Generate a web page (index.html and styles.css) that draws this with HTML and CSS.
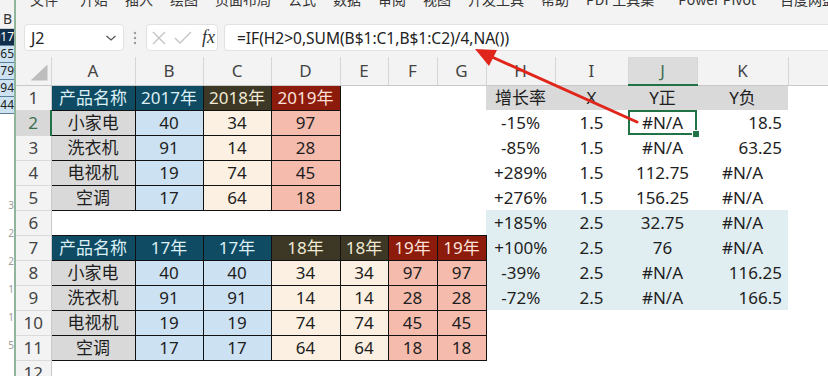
FILE: index.html
```html
<!DOCTYPE html>
<html lang="zh-CN">
<head>
    <meta charset="UTF-8">
    <title>工作簿 - Excel</title>
    <link rel="stylesheet" href="styles.css">
</head>
<body>
    <div class="screen">
        <!-- other workbook window peeking out on the left -->
        <aside class="behind">
            <div class="bh-top"></div>
            <div class="bh-col">B</div>
            <div class="bh-cell bh-head">017</div>
            <div class="bh-cell">65</div>
            <div class="bh-cell">79</div>
            <div class="bh-cell">94</div>
            <div class="bh-cell">44</div>
            <div class="bh-axis">
                <span>3</span><span>2</span><span>2</span><span>1</span><span>1</span><span>5</span>
            </div>
        </aside>

        <div class="excel">
            <nav class="tabs">
                <span class="first">文件</span><span>开始</span><span>插入</span><span>绘图</span><span>页面布局</span>
                <span>公式</span><span>数据</span><span>审阅</span><span>视图</span><span>开发工具</span>
                <span>帮助</span><span class="wide">PDF工具集</span><span class="wide">Power Pivot</span><span>百度网盘</span>
            </nav>

            <div class="formula-bar">
                <div class="name-box">
                    <span>J2</span>
                    <svg width="12" height="8" viewBox="0 0 12 8"><path d="M1.5 2 L6 6 L10.5 2" fill="none" stroke="#555" stroke-width="1.3"/></svg>
                </div>
                <div class="grip">
                    <svg width="4" height="14" viewBox="0 0 4 14"><circle cx="2" cy="2" r="1.2"/><circle cx="2" cy="7" r="1.2"/><circle cx="2" cy="12" r="1.2"/></svg>
                </div>
                <div class="fx-box">
                    <svg width="14" height="14" viewBox="0 0 14 14"><path d="M1 1 L13 13 M13 1 L1 13" stroke="#c4c4c4" stroke-width="1.4"/></svg>
                    <svg width="18" height="14" viewBox="0 0 18 14"><path d="M1 7 L6 12 L17 1" fill="none" stroke="#c4c4c4" stroke-width="1.4"/></svg>
                    <span class="fx">fx</span>
                </div>
                <div class="formula-input">=IF(H2&gt;0,SUM(B$1:C1,B$1:C2)/4,NA())</div>
            </div>

            <div class="sheet">
                <table class="grid">
                    <colgroup>
                        <col class="w-rh"><col class="w-a"><col class="w-b"><col class="w-c"><col class="w-d">
                        <col class="w-e"><col class="w-f"><col class="w-g"><col class="w-h"><col class="w-i">
                        <col class="w-j"><col class="w-k"><col class="w-l">
                    </colgroup>
                    <tr class="head">
                        <th class="corner"><span class="tri"></span></th>
                        <th>A</th><th>B</th><th>C</th><th>D</th><th>E</th><th>F</th><th>G</th>
                        <th>H</th><th>I</th><th class="on">J</th><th>K</th><th></th>
                    </tr>
                    <tr>
                        <th class="rh">1</th>
                        <td class="bd teal">产品名称</td><td class="bd teal">2017年</td><td class="bd olive">2018年</td><td class="bd red">2019年</td>
                        <td></td><td></td><td></td>
                        <td class="gr">增长率</td><td class="gr">X</td><td class="gr">Y正</td><td class="gr">Y负</td><td></td>
                    </tr>
                    <tr>
                        <th class="rh on">2</th>
                        <td class="bd grey">小家电</td><td class="bd blue">40</td><td class="bd cream">34</td><td class="bd pink">97</td>
                        <td></td><td></td><td></td>
                        <td>-15%</td><td>1.5</td><td class="sel">#N/A</td><td class="num">18.5</td><td></td>
                    </tr>
                    <tr>
                        <th class="rh">3</th>
                        <td class="bd grey">洗衣机</td><td class="bd blue">91</td><td class="bd cream">14</td><td class="bd pink">28</td>
                        <td></td><td></td><td></td>
                        <td>-85%</td><td>1.5</td><td>#N/A</td><td class="num">63.25</td><td></td>
                    </tr>
                    <tr>
                        <th class="rh">4</th>
                        <td class="bd grey">电视机</td><td class="bd blue">19</td><td class="bd cream">74</td><td class="bd pink">45</td>
                        <td></td><td></td><td></td>
                        <td>+289%</td><td>1.5</td><td>112.75</td><td>#N/A</td><td></td>
                    </tr>
                    <tr>
                        <th class="rh">5</th>
                        <td class="bd grey">空调</td><td class="bd blue">17</td><td class="bd cream">64</td><td class="bd pink">18</td>
                        <td></td><td></td><td></td>
                        <td>+276%</td><td>1.5</td><td>156.25</td><td>#N/A</td><td></td>
                    </tr>
                    <tr>
                        <th class="rh">6</th>
                        <td></td><td></td><td></td><td></td><td></td><td></td><td></td>
                        <td class="mist">+185%</td><td class="mist">2.5</td><td class="mist">32.75</td><td class="mist">#N/A</td><td></td>
                    </tr>
                    <tr>
                        <th class="rh">7</th>
                        <td class="bd teal">产品名称</td><td class="bd teal">17年</td><td class="bd teal">17年</td>
                        <td class="bd olive">18年</td><td class="bd olive">18年</td><td class="bd red">19年</td><td class="bd red">19年</td>
                        <td class="mist">+100%</td><td class="mist">2.5</td><td class="mist">76</td><td class="mist">#N/A</td><td></td>
                    </tr>
                    <tr>
                        <th class="rh">8</th>
                        <td class="bd grey">小家电</td><td class="bd blue">40</td><td class="bd blue">40</td>
                        <td class="bd cream">34</td><td class="bd cream">34</td><td class="bd pink">97</td><td class="bd pink">97</td>
                        <td class="mist">-39%</td><td class="mist">2.5</td><td class="mist">#N/A</td><td class="mist num">116.25</td><td></td>
                    </tr>
                    <tr>
                        <th class="rh">9</th>
                        <td class="bd grey">洗衣机</td><td class="bd blue">91</td><td class="bd blue">91</td>
                        <td class="bd cream">14</td><td class="bd cream">14</td><td class="bd pink">28</td><td class="bd pink">28</td>
                        <td class="mist">-72%</td><td class="mist">2.5</td><td class="mist">#N/A</td><td class="mist num">166.5</td><td></td>
                    </tr>
                    <tr>
                        <th class="rh">10</th>
                        <td class="bd grey">电视机</td><td class="bd blue">19</td><td class="bd blue">19</td>
                        <td class="bd cream">74</td><td class="bd cream">74</td><td class="bd pink">45</td><td class="bd pink">45</td>
                        <td></td><td></td><td></td><td></td><td></td>
                    </tr>
                    <tr>
                        <th class="rh">11</th>
                        <td class="bd grey">空调</td><td class="bd blue">17</td><td class="bd blue">17</td>
                        <td class="bd cream">64</td><td class="bd cream">64</td><td class="bd pink">18</td><td class="bd pink">18</td>
                        <td></td><td></td><td></td><td></td><td></td>
                    </tr>
                    <tr>
                        <th class="rh">12</th>
                        <td></td><td></td><td></td><td></td><td></td><td></td><td></td>
                        <td></td><td></td><td></td><td></td><td></td>
                    </tr>
                </table>
            </div>
        </div>

        <!-- red callout pointing at the formula -->
        <svg class="arrow" width="828" height="376" viewBox="0 0 828 376">
            <line x1="637" y1="122" x2="492" y2="57" stroke="#e0251b" stroke-width="3" stroke-linecap="round"/>
            <polygon points="475,49 497,50 489,66" fill="#e0251b"/>
        </svg>
    </div>
</body>
</html>
```

FILE: styles.css
```css
* {
    margin: 0;
    padding: 0;
    box-sizing: border-box;
}

body {
    width: 828px;
    height: 376px;
    overflow: hidden;
    background: #ffffff;
    font-family: 'Noto Sans', 'Noto Sans CJK SC', sans-serif;
    color: #222;
}

.screen {
    position: relative;
    display: flex;
    width: 828px;
    height: 376px;
    overflow: hidden;
}

/* ---- window behind ---- */
.behind {
    width: 16px;
    flex: none;
    display: flex;
    flex-direction: column;
    overflow: hidden;
    border-right: 2px solid #8fb59c;
    background: #fff;
    font-size: 12px;
    line-height: 14px;
}

.bh-top {
    height: 10px;
    background: #f3f3f3;
}

.bh-col {
    height: 19px;
    padding: 2px 0 0 3px;
    background: #f3f3f3;
    color: #333;
    font-size: 14px;
    border-bottom: 1px solid #cfcfcf;
}

.bh-cell {
    height: 17px;
    display: flex;
    justify-content: flex-end;
    align-items: center;
    background: #cde3f3;
    border-bottom: 1px solid #5c7f99;
    color: #222;
    white-space: nowrap;
}

.bh-head {
    background: #102f4c;
    color: #fff;
}

.bh-axis {
    display: flex;
    flex-direction: column;
    align-items: flex-end;
    gap: 14px;
    padding-top: 84px;
    font-size: 10px;
    line-height: 14px;
    color: #9a9a9a;
}

/* ---- excel window ---- */
.excel {
    flex: 1;
    display: flex;
    flex-direction: column;
    background: #f3f3f3;
    overflow: hidden;
}

.tabs {
    display: flex;
    gap: 17px;
    height: 20px;
    margin-top: -11px;
    padding-left: 14px;
    font-family: 'Noto Sans CJK SC', sans-serif;
    font-size: 14px;
    line-height: 20px;
    color: #333;
    white-space: nowrap;
}

.tabs .first {
    margin-right: 5px;
}

.tabs .wide {
    margin-right: 7px;
}

.formula-bar {
    display: flex;
    align-items: center;
    height: 27px;
    margin-top: 15px;
    padding-left: 8px;
}

.name-box,
.fx-box,
.formula-input {
    height: 27px;
    background: #fff;
    border: 1px solid #e2e2e2;
    border-radius: 4px;
    display: flex;
    align-items: center;
}

.name-box {
    width: 100px;
    justify-content: space-between;
    padding: 0 6px 0 6px;
    font-size: 16px;
    color: #222;
}

.grip {
    width: 22px;
    display: flex;
    justify-content: center;
    fill: #9a9a9a;
}

.fx-box {
    width: 72px;
    gap: 8px;
    padding-left: 5px;
}

.fx {
    font-family: 'Liberation Serif', serif;
    font-style: italic;
    font-size: 18px;
    color: #333;
    margin-left: 2px;
}

.formula-input {
    flex: 1;
    margin-left: 6px;
    padding-left: 12px;
    font-size: 15.5px;
    color: #222;
    border-right: none;
    border-radius: 4px 0 0 4px;
    white-space: nowrap;
}

/* ---- sheet grid ---- */
.sheet {
    flex: 1;
    margin-top: 6px;
    background: #fff;
    overflow: hidden;
}

.grid {
    border-collapse: collapse;
    table-layout: fixed;
    width: 832px;
    font-size: 17px;
}

.w-rh { width: 35px; }
.w-a { width: 84px; }
.w-b { width: 68px; }
.w-c { width: 68px; }
.w-d { width: 69px; }
.w-e { width: 48px; }
.w-f { width: 49px; }
.w-g { width: 49px; }
.w-h { width: 69px; }
.w-i { width: 73px; }
.w-j { width: 69px; }
.w-k { width: 91px; }
.w-l { width: 60px; }

.grid tr {
    height: 25px;
}

.grid tr.head {
    height: 28px;
}

.grid td {
    text-align: center;
    vertical-align: middle;
    white-space: nowrap;
    padding: 0;
    line-height: 22px;
    color: #1e1e1e;
}

.head th {
    background: #f3f3f3;
    color: #444;
    font-weight: normal;
    border-right: 1px solid #d6d6d6;
    border-bottom: 1px solid #c9c9c9;
}

.head th.on {
    background: #dcdcdc;
    color: #3d6e52;
    border-bottom: 2px solid #217346;
}

.head th.corner {
    text-align: right;
    vertical-align: bottom;
    padding: 0 3px 4px 0;
    line-height: 0;
}

.tri {
    display: inline-block;
    width: 17px;
    height: 16px;
    background: #bdbdbd;
    clip-path: polygon(100% 0, 100% 100%, 0 100%);
}

.rh {
    background: #f3f3f3;
    color: #444;
    font-weight: normal;
    text-align: center;
    border-right: 1px solid #c9c9c9;
    border-bottom: 1px solid #dadada;
}

.rh.on {
    background: #d8d8d8;
    color: #3d6e52;
    border-right: 2px solid #217346;
}

/* bordered data blocks */
.grid td.bd { border: 1px solid #111; }
.grid td.teal { background: #0f4b62; color: #dceff6; }
.grid td.olive { background: #3c3825; color: #f2ead5; }
.grid td.red { background: #8c1b0b; color: #fbe1d9; }
.grid td.grey { background: #d9d9d9; }
.grid td.blue { background: #cce1f2; }
.grid td.cream { background: #fbf0e2; }
.grid td.pink { background: #f5bcae; }

.grid td.gr { background: #d9d9d9; }
.grid td.mist { background: #e0eef1; }

.grid td.num {
    text-align: right;
    padding-right: 6px;
}

.sel {
    position: relative;
    box-shadow: inset 0 0 0 2px #217346;
}

.sel::after {
    content: '';
    position: absolute;
    right: -3px;
    bottom: -3px;
    width: 6px;
    height: 6px;
    background: #217346;
    border: 1px solid #fff;
}

.arrow {
    position: absolute;
    top: 0;
    left: 0;
    pointer-events: none;
}
```
